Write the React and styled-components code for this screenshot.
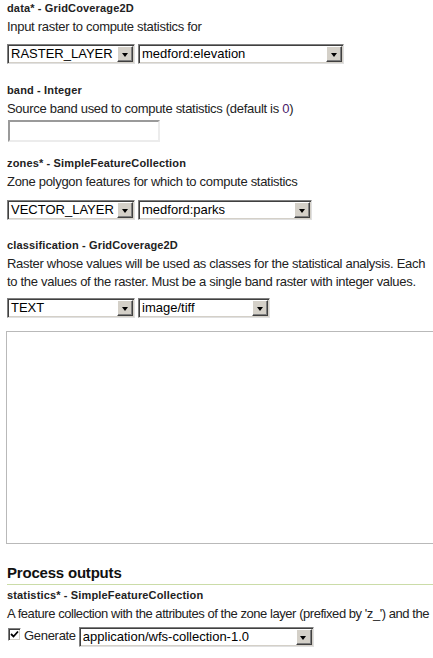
import React from 'react'
import styled, { createGlobalStyle } from 'styled-components'

const GlobalStyle = createGlobalStyle`
    body {
        margin: 0;
        background: #fff;
        font-family: "Liberation Sans", Arial, sans-serif;
        color: #222;
        overflow: hidden;
    }
`
const Page = styled.div`
    padding: 0 0 0 7px;
    width: 433px;
    box-sizing: border-box;
`
const Section = styled.div`
    margin-top: ${props => props.$top || 0}px;
`
const Label = styled.div`
    font-size: 11px;
    font-weight: bold;
    line-height: 16px;
    letter-spacing: 0.15px;
    color: #222;
    white-space: nowrap;
`
const Desc = styled.div`
    font-size: 13px;
    line-height: 18px;
    letter-spacing: ${props => props.$tight ? -0.45 : -0.3}px;
    margin-top: 2px;
    color: #222;
    white-space: nowrap;

    em {
        font-style: normal;
        color: #4a1a6a;
    }
`
const Row = styled.div`
    display: flex;
    align-items: center;
    gap: ${props => props.$gap || 3}px;
    margin-top: ${props => props.$top || 8}px;
`
const SelectBox = styled.div`
    display: flex;
    align-items: stretch;
    box-sizing: border-box;
    width: ${props => props.$w}px;
    height: 20px;
    border: 1px solid;
    border-color: #808080 #e0e0e0 #e0e0e0 #808080;
    box-shadow: inset 1px 1px 0 #404040, inset -1px -1px 0 #d4d0c8;
    background: #fff;
    padding: 1px;
`
const SelectText = styled.span`
    flex: 1;
    font-size: 13px;
    line-height: 16px;
    padding-left: 2px;
    color: #000;
    white-space: nowrap;
    overflow: hidden;
`
const ArrowButton = styled.span`
    width: 16px;
    box-sizing: border-box;
    background: #d4d0c8;
    border: 1px solid;
    border-color: #fff #404040 #404040 #fff;
    box-shadow: inset -1px -1px 0 #808080;
    display: flex;
    align-items: center;
    justify-content: center;

    &::after {
        content: '';
        border-left: 3.5px solid transparent;
        border-right: 3.5px solid transparent;
        border-top: 4px solid #000;
        margin: 1px 1px 0 0;
    }
`
const TextInput = styled.div`
    box-sizing: border-box;
    width: 152px;
    height: 22px;
    margin: 2px 0 0 1px;
    border: 2px solid;
    border-color: #9a9a9a #ececec #ececec #9a9a9a;
    background: #fff;
`
const TextArea = styled.div`
    box-sizing: border-box;
    width: 440px;
    height: 213px;
    margin: 13px 0 0 -1px;
    border: 1px solid #b9b9b9;
    background: #fff;
`
const Heading = styled.h3`
    margin: 19px -7px 0 0;
    font-size: 15px;
    font-weight: bold;
    line-height: 20px;
    letter-spacing: -0.2px;
    padding-bottom: 1px;
    color: #111;
    border-bottom: 1px solid #cbdca8;
`
const CheckBox = styled.span`
    box-sizing: border-box;
    width: 13px;
    height: 13px;
    margin: 0 0 6px 1px;
    border: 1px solid;
    border-color: #808080 #fff #fff #808080;
    box-shadow: inset 1px 1px 0 #404040, inset -1px -1px 0 #d4d0c8;
    background: #fff;
    display: flex;
    align-items: center;
    justify-content: center;
`
const CheckText = styled.span`
    font-size: 13px;
    letter-spacing: -0.3px;
    color: #222;
    margin: 0 0 3px 0;
`

const Select = ({ w, children }) => (
    <SelectBox $w={w}>
        <SelectText>{children}</SelectText>
        <ArrowButton />
    </SelectBox>
)

export default function App() {
    return (
        <Page>
            <GlobalStyle />
            <Section>
                <Label>data* - GridCoverage2D</Label>
                <Desc>Input raster to compute statistics for</Desc>
                <Row>
                    <Select w={128}>RASTER_LAYER</Select>
                    <Select w={206}>medford:elevation</Select>
                </Row>
            </Section>
            <Section $top={18}>
                <Label>band - Integer</Label>
                <Desc>Source band used to compute statistics (default is <em>0</em>)</Desc>
                <TextInput />
            </Section>
            <Section $top={13}>
                <Label>zones* - SimpleFeatureCollection</Label>
                <Desc>Zone polygon features for which to compute statistics</Desc>
                <Row $top={9}>
                    <Select w={128}>VECTOR_LAYER</Select>
                    <Select w={174}>medford:parks</Select>
                </Row>
            </Section>
            <Section $top={17}>
                <Label>classification - GridCoverage2D</Label>
                <Desc>
                    Raster whose values will be used as classes for the statistical analysis. Each<br />
                    to the values of the raster. Must be a single band raster with integer values.
                </Desc>
                <Row $top={7}>
                    <Select w={128}>TEXT</Select>
                    <Select w={132}>image/tiff</Select>
                </Row>
                <TextArea />
            </Section>
            <Heading>Process outputs</Heading>
            <Section $top={2}>
                <Label>statistics* - SimpleFeatureCollection</Label>
                <Desc $tight>A feature collection with the attributes of the zone layer (prefixed by 'z_') and the</Desc>
                <Row $top={4} $gap={3}>
                    <CheckBox>
                        <svg width="9" height="9" viewBox="0 0 9 9">
                            <path d="M1 4 L3.5 6.5 L8 1.5" fill="none" stroke="#000" strokeWidth="1.8" />
                        </svg>
                    </CheckBox>
                    <CheckText>Generate</CheckText>
                    <Select w={235}>application/wfs-collection-1.0</Select>
                </Row>
            </Section>
        </Page>
    )
}
